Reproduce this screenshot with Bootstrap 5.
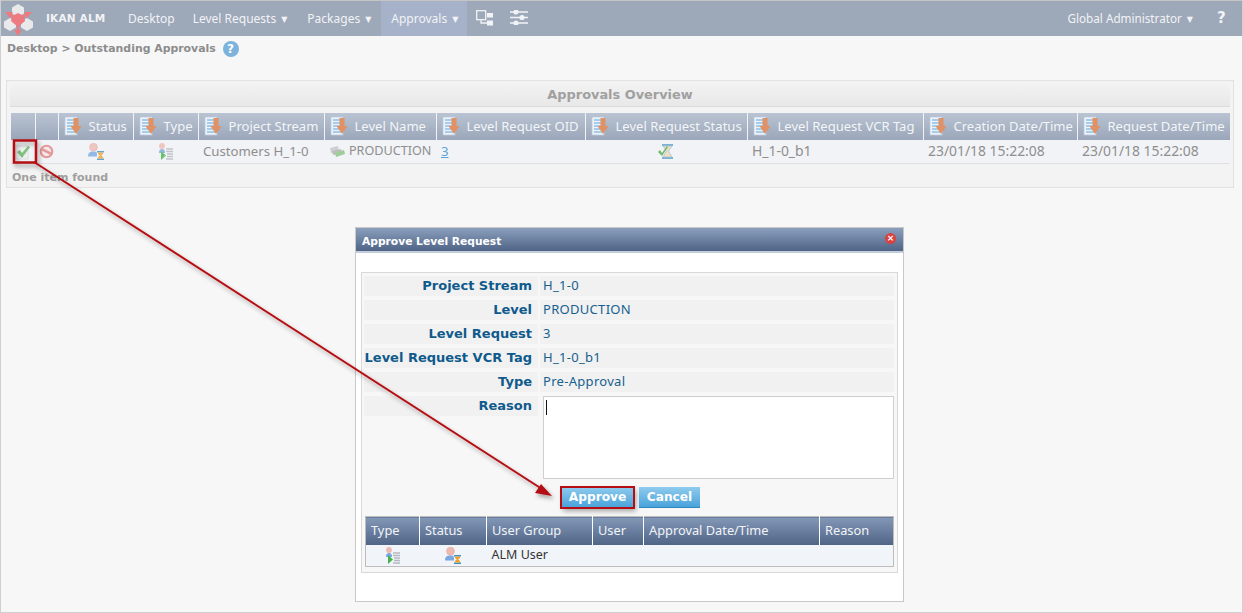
<!DOCTYPE html>
<html lang="en">

<head>
    <meta charset="UTF-8">
    <title>IKAN ALM - Outstanding Approvals</title>
    <link href="https://cdn.jsdelivr.net/npm/bootstrap@5.3.0/dist/css/bootstrap.min.css" rel="stylesheet" />
    <style>
        html, body { height: 613px; overflow: hidden; }
        body { background: #f7f7f7; font-family: "Noto Sans", "DejaVu Sans", sans-serif; font-size: 12px; color: #8a8a8a; position: relative; border-left: 1px solid #d0d0d0; border-right: 1px solid #d0d0d0; border-bottom: 1px solid #d0d0d0; }
        .topbar { background: #9da8b9; height: 36px; margin-left: -1px; margin-right: -1px; border-top: 1px solid #c4c4c4; padding: 0; align-items: stretch; flex-wrap: nowrap; justify-content: flex-start; }
        .logo-box { width: 46px; flex: none; display: flex; align-items: center; }
        .brand-txt { font-family: "DejaVu Sans", sans-serif; font-weight: 700; font-size: 10.5px; color: #f2f3f6; width: 72px; flex: none; line-height: 35px; letter-spacing: .2px; }
        .top-link { color: #f2f3f6; padding: 0 10px; line-height: 35px; font-size: 12px; text-decoration: none; white-space: nowrap; }
        .top-link.first-link { padding-right: 8px; }
        .top-link.user-link { font-size: 11.7px; }
        .top-link.is-on { background: #a6b2c9; padding-right: 9px; }
        .caret-mark { font-size: 8px; margin-left: 5px; vertical-align: 1px; }
        .top-ico { display: flex; align-items: center; padding: 0 8px 2px 9px; }
        .top-ico.tight { padding-right: 7px; }
        .help-mark { font-family: "DejaVu Sans", sans-serif; font-weight: 700; font-size: 15px; color: #f2f3f6; line-height: 35px; width: 40px; padding-left: 14px; }
        .crumbs { font-family: "DejaVu Sans", sans-serif; font-weight: 700; font-size: 10.9px; color: #8c8c8c; padding: 3px 0 0 6px; height: 44px; line-height: 20px; }
        .help-dot { display: inline-block; width: 16px; height: 16px; border-radius: 50%; background: #7db2dd; color: #fff; text-align: center; line-height: 16px; font-size: 12px; margin-left: 3px; vertical-align: -1px; }
        .overview { margin: 0 8px 0 5px; height: 108px; background: #f3f3f3; border: 1px solid #e2e2e2; padding: 3px; }
        .ov-title { height: 23px; background: linear-gradient(#f2f2f2, #e8e8e8); border-bottom: 1px solid #dcdcdc; text-align: center; font-family: "DejaVu Sans", sans-serif; font-weight: 700; font-size: 12.9px; color: #a0a0a0; line-height: 22px; margin-bottom: 6px; }
        .ov-table { table-layout: fixed; border-collapse: collapse; width: 1219px; margin: 0 0 0 1px; }
        .ov-table th { height: 27px; background: linear-gradient(#b9c3d2, #9aa6b9); color: #f3f5f8; font-weight: 400; font-size: 13.05px; border-left: 1px solid #f3f3f3; padding: 0 0 0 5px; white-space: nowrap; overflow: hidden; }
        .ov-table th:first-child { border-left: 0; }
        .ov-table td { height: 23px; background: #f2f3f6; border-bottom: 1px solid #e0e0e0; font-size: 13.2px; color: #8e8e8e; padding: 1px 0 0 5px; white-space: nowrap; }
        .ov-table td.lvl-cell { font-size: 12.6px; padding-top: 0; }
        .ov-table td.num-cell { font-size: 13.9px; }
        .ov-table svg { vertical-align: middle; }
        .ov-table td svg { opacity: .78; }
        .sort-ico { margin-right: 5px; vertical-align: -5px !important; }
        .ov-table td a { color: #5fa4d8; }
        .found-txt { font-family: "DejaVu Sans", sans-serif; font-weight: 700; font-size: 11px; color: #a0a0a0; padding: 6px 0 0 2px; }
        .dlg { position: absolute; left: 354px; top: 227px; width: 549px; height: 375px; background: #fff; border: 1px solid #c8c8c8; }
        .dlg-head { height: 25px; background: linear-gradient(#8b9fbd, #4f6486); border-bottom: 2px solid #c3ccd9; color: #fff; font-family: "DejaVu Sans", sans-serif; font-weight: 700; font-size: 10.7px; padding: 5px 6px 0; justify-content: space-between; }
        .close-dot { width: 11px; height: 11px; border-radius: 50%; background: #d9403f; color: #fff; font-size: 9px; line-height: 11px; text-align: center; margin-right: 1px; margin-bottom: 7px; }
        .dlg-box { margin: 19px 5px 0 5px; height: 301px; border: 1px solid #d8d8d8; background: #f7f7f7; padding: 3px 3px 0 2px; }
        .f-row { display: flex; gap: 2px; margin-bottom: 4px; height: 20px; }
        .f-row.is-tall { height: 83px; margin-bottom: 8px; }
        .f-label { width: 174px; flex: none; height: 20px; background: #f1f1f1; text-align: right; padding-right: 6px; font-family: "DejaVu Sans", sans-serif; font-weight: 700; font-size: 13px; color: #0f5a8c; line-height: 20px; white-space: nowrap; }
        .f-value { flex: 1; background: #f1f1f1; padding-left: 3px; font-size: 13px; color: #16608f; line-height: 19px; letter-spacing: .3px; }
        .reason-box { flex: 1; margin: 0 0 0 3px; height: 83px; background: #fff; border: 1px solid #cfcfcf; position: relative; }
        .reason-box i { position: absolute; left: 2px; top: 3px; width: 1px; height: 15px; background: #111; }
        .btn-row { display: flex; gap: 5px; padding-left: 197px; height: 21px; margin-bottom: 8px; }
        .blue-btn { border: 0; border-radius: 0; padding: 0; font-family: "DejaVu Sans", sans-serif; font-weight: 700; font-size: 12.2px; color: #fff; background: linear-gradient(#8fcbee, #4aa3da); border-bottom: 1px solid #2f86c0; height: 21px; }
        .blue-btn.go { width: 73px; outline: 2px solid #b50d12; outline-offset: -1px; box-shadow: 2px 3px 5px rgba(0,0,0,.35); }
        .blue-btn.stop { width: 61px; }
        .sub-table { table-layout: fixed; width: 528px; margin-left: 1px; border-collapse: collapse; border: 1px solid #bdbdbd; }
        .sub-table th { height: 28px; background: linear-gradient(#8398b7, #4f6486); color: #f2f4f8; font-weight: 400; font-size: 12.8px; padding: 0 0 0 5px; border-left: 1px solid #fff; }
        .sub-table th:first-child { border-left: 0; }
        .sub-table td { height: 22px; background: #f1f5fa; font-size: 12.5px; color: #333; padding: 0 0 0 5px; }
        .sub-table svg { display: block; margin: 0 auto; }
        .arrow-layer { position: absolute; left: -1px; top: 0; pointer-events: none; }
    </style>
</head>

<body>
    <svg width="0" height="0" class="d-block" aria-hidden="true">
        <symbol id="sortIco" viewBox="0 0 20 20">
            <rect x="1" y="1" width="12" height="18" fill="#eef3f9" stroke="#b9c8dc" stroke-width=".8" />
            <path d="M3 4h8M3 7h8M3 10h8M3 13h8M3 16h8" stroke="#8fc0e6" stroke-width="1.4" />
            <path d="M9.5 2h5v8h3l-5.5 8L6.5 10h3z" fill="#e09264" />
        </symbol>
        <symbol id="userWait" viewBox="0 0 18 17">
            <circle cx="6.500" cy="4.200" r="4" fill="#efb9b0" stroke="#d8a69e" stroke-width=".5" />
            <path d="M1 13.500c0-4 2-5 5.500-5s3.500 .5 3.500 5z" fill="#7aa8e2" />
            <path d="M10 8h7v1.500h-7zM10 15.500h7v1.500h-7z" fill="#3f8fc4" />
            <path d="M11 9.500h5v1.500l-1.800 1.500 1.800 1.500v1.500h-5V14l1.800-1.500L11 11z" fill="#f0a12a" />
        </symbol>
        <symbol id="typeIco" viewBox="0 0 16 17">
            <circle cx="4" cy="3" r="2.900" fill="#efb9b0" />
            <path d="M1 10c0-3 1-4 3-4s3 1 3 4z" fill="#7aa8e2" />
            <path d="M3 8l5 4.500-5 4.500z" fill="#45b54a" />
            <path d="M8 6h7M8 8.500h7M9 11h6M9 13.500h6M8 16h7" stroke="#b4b9bf" stroke-width="1.300" />
        </symbol>
    </svg>

    <nav class="navbar topbar d-flex">
        <div class="logo-box">
            <svg width="36" height="36" viewBox="0 0 36 36">
                <path d="M18 3l6 3.500v6L18 16l-6-3.500v-6z" fill="#e9e9ec" />
                <path d="M10 17l6 3.500v6L10 30l-6-3.500v-6z" fill="#e9e9ec" />
                <path d="M27 17l6 3.500v6L27 30l-6-3.500v-6z" fill="#e9e9ec" />
                <path d="M18 12l6 3 1 5-7 6-7-6 1-5z" fill="#ec7a80" />
                <path d="M5 11l8 0-3 6zM32 11l-8 0 3 6zM18 35l-4-6h8z" fill="#ec7a80" />
                <path d="M9 13l9 6 9-6M18 19v12" stroke="#ec7a80" stroke-width="2.500" fill="none" />
            </svg>
        </div>
        <span class="brand-txt">IKAN ALM</span>
        <a class="top-link first-link">Desktop</a>
        <a class="top-link">Level Requests<span class="caret-mark">▼</span></a>
        <a class="top-link">Packages<span class="caret-mark">▼</span></a>
        <a class="top-link is-on">Approvals<span class="caret-mark">▼</span></a>
        <span class="top-ico tight">
            <svg width="18" height="16" viewBox="0 0 18 16" fill="none" stroke="#f2f3f6" stroke-width="1.300">
                <rect x=".7" y=".7" width="9" height="9" />
                <rect x="11" y="3" width="6" height="4.500" fill="#f2f3f6" stroke="none" />
                <rect x="11" y="10.500" width="6" height="5" fill="#f2f3f6" stroke="none" />
                <path d="M5 10v3h6" />
            </svg>
        </span>
        <span class="top-ico">
            <svg width="18" height="15" viewBox="0 0 18 15" stroke="#f2f3f6" stroke-width="1.400" fill="#f2f3f6">
                <path d="M0 2h18M0 7.500h18M0 13h18" />
                <circle cx="6" cy="2" r="1.900" />
                <circle cx="12" cy="7.500" r="1.900" />
                <circle cx="6" cy="13" r="1.900" />
            </svg>
        </span>
        <span class="ms-auto top-link user-link">Global Administrator<span class="caret-mark">▼</span></span>
        <span class="help-mark">?</span>
    </nav>

    <div class="crumbs">Desktop &gt; Outstanding Approvals <span class="help-dot">?</span></div>

    <section class="overview">
        <div class="ov-title">Approvals Overview</div>
        <table class="ov-table">
            <colgroup>
                <col style="width:24px"><col style="width:23px"><col style="width:75px"><col style="width:65px"><col style="width:126px"><col style="width:112px"><col style="width:149px"><col style="width:162px"><col style="width:176px"><col style="width:154px"><col style="width:153px">
            </colgroup>
            <thead>
                <tr>
                    <th></th>
                    <th></th>
                    <th><svg class="sort-ico" width="20" height="20"><use href="#sortIco" /></svg>Status</th>
                    <th><svg class="sort-ico" width="20" height="20"><use href="#sortIco" /></svg>Type</th>
                    <th><svg class="sort-ico" width="20" height="20"><use href="#sortIco" /></svg>Project Stream</th>
                    <th><svg class="sort-ico" width="20" height="20"><use href="#sortIco" /></svg>Level Name</th>
                    <th><svg class="sort-ico" width="20" height="20"><use href="#sortIco" /></svg>Level Request OID</th>
                    <th><svg class="sort-ico" width="20" height="20"><use href="#sortIco" /></svg>Level Request Status</th>
                    <th><svg class="sort-ico" width="20" height="20"><use href="#sortIco" /></svg>Level Request VCR Tag</th>
                    <th><svg class="sort-ico" width="20" height="20"><use href="#sortIco" /></svg>Creation Date/Time</th>
                    <th><svg class="sort-ico" width="20" height="20"><use href="#sortIco" /></svg>Request Date/Time</th>
                </tr>
            </thead>
            <tbody>
                <tr>
                    <td class="p-0 text-center">
                        <svg width="16" height="16" viewBox="0 0 16 16">
                            <rect x="1" y="2" width="12" height="13" fill="#eceff0" stroke="#d5d8da" />
                            <path d="M2 8l3-2 2 3 6-7 2 1-8 11z" fill="#5fb35c" />
                        </svg>
                    </td>
                    <td class="p-0 text-center">
                        <svg width="15" height="15" viewBox="0 0 14 14">
                            <circle cx="7" cy="7" r="5.400" fill="#f6e4e4" stroke="#e07f7f" stroke-width="2" />
                            <path d="M3 5l8 4" stroke="#e07f7f" stroke-width="2.400" />
                        </svg>
                    </td>
                    <td class="p-0 text-center"><svg width="18" height="17"><use href="#userWait" /></svg></td>
                    <td class="p-0 text-center"><svg width="16" height="17"><use href="#typeIco" /></svg></td>
                    <td>Customers H_1-0</td>
                    <td class="lvl-cell">
                        <svg width="16" height="12" viewBox="0 0 16 12" class="me-1">
                            <path d="M1 3l8-2 1 5-8 2z" fill="#c4c6c6" />
                            <path d="M3 6l9-2 1 4-9 2z" fill="#aab0ad" />
                            <path d="M6 8l9-3 1 4-9 3z" fill="#84c57e" />
                        </svg>PRODUCTION
                    </td>
                    <td><a href="#">3</a></td>
                    <td class="p-0 text-center">
                        <svg width="16" height="17" viewBox="0 0 16 17">
                            <path d="M4 1h11v2H4zM4 14h11v2H4z" fill="#5b9fc9" />
                            <path d="M5 3h9l-3.500 5 3.500 6H5l3.500-6z" fill="#f0d9ae" stroke="#8fb8d2" stroke-width=".8" />
                            <path d="M0 9l2-2 2 3 5-7 1 1-6 9z" fill="#4ea94a" />
                        </svg>
                    </td>
                    <td class="num-cell">H_1-0_b1</td>
                    <td class="num-cell">23/01/18 15:22:08</td>
                    <td class="num-cell">23/01/18 15:22:08</td>
                </tr>
            </tbody>
        </table>
        <div class="found-txt">One item found</div>
    </section>

    <div class="dlg">
        <div class="dlg-head d-flex align-items-center">
            <span>Approve Level Request</span>
            <span class="close-dot">×</span>
        </div>
        <div class="dlg-box">
            <div class="f-row"><div class="f-label">Project Stream</div><div class="f-value">H_1-0</div></div>
            <div class="f-row"><div class="f-label">Level</div><div class="f-value">PRODUCTION</div></div>
            <div class="f-row"><div class="f-label">Level Request</div><div class="f-value">3</div></div>
            <div class="f-row"><div class="f-label">Level Request VCR Tag</div><div class="f-value">H_1-0_b1</div></div>
            <div class="f-row"><div class="f-label">Type</div><div class="f-value">Pre-Approval</div></div>
            <div class="f-row is-tall">
                <div class="f-label">Reason</div>
                <div class="reason-box"><i></i></div>
            </div>
            <div class="btn-row">
                <button type="button" class="btn blue-btn go">Approve</button>
                <button type="button" class="btn blue-btn stop">Cancel</button>
            </div>
            <table class="sub-table">
                <colgroup>
                    <col style="width:54px"><col style="width:67px"><col style="width:106px"><col style="width:51px"><col style="width:176px"><col style="width:74px">
                </colgroup>
                <thead>
                    <tr><th>Type</th><th>Status</th><th>User Group</th><th>User</th><th>Approval Date/Time</th><th>Reason</th></tr>
                </thead>
                <tbody>
                    <tr>
                        <td class="p-0"><svg width="16" height="17"><use href="#typeIco" /></svg></td>
                        <td class="p-0"><svg width="18" height="17"><use href="#userWait" /></svg></td>
                        <td>ALM User</td>
                        <td></td>
                        <td></td>
                        <td></td>
                    </tr>
                </tbody>
            </table>
        </div>
    </div>

    <svg class="arrow-layer" width="1243" height="613" viewBox="0 0 1243 613" fill="none">
        <defs>
            <filter id="softShade" x="-10%" y="-10%" width="120%" height="120%">
                <feDropShadow dx="2" dy="3" stdDeviation="2" flood-color="#000" flood-opacity=".35" />
            </filter>
        </defs>
        <g filter="url(#softShade)">
            <rect x="14" y="140.500" width="22" height="22" stroke="#b50d12" stroke-width="2.500" />
            <path d="M34 162L542 489" stroke="#b50d12" stroke-width="2" />
            <path d="M552 496L535 493L541 484z" fill="#b50d12" />
        </g>
    </svg>
</body>

</html>
